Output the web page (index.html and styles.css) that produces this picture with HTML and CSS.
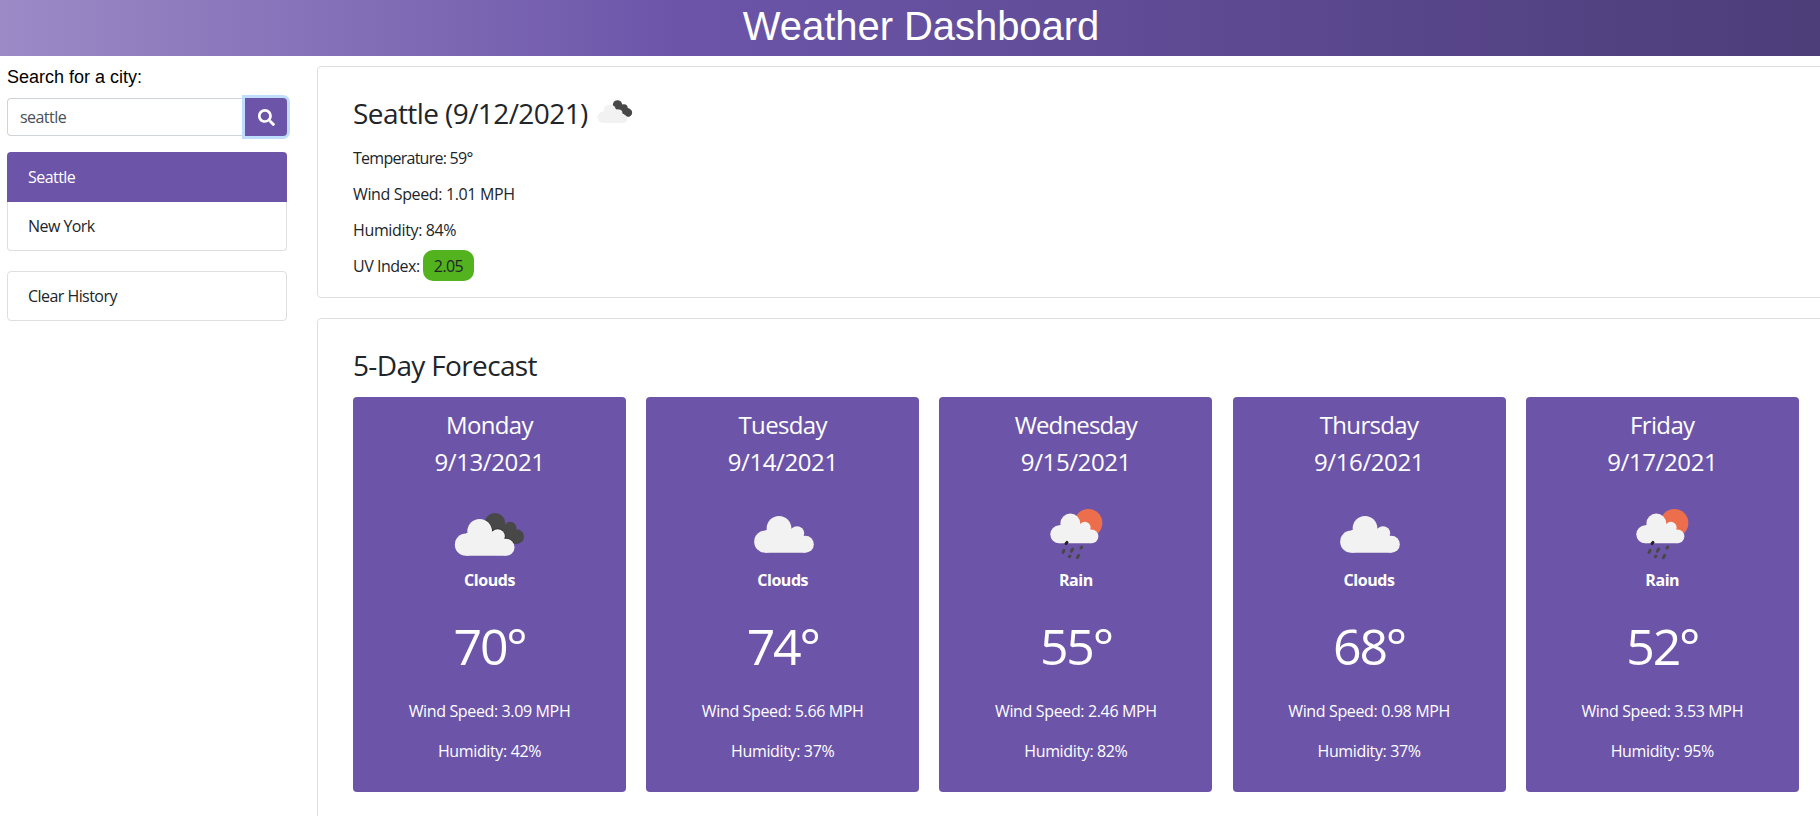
FILE: index.html
```html
<!DOCTYPE html>
<html lang="en">
<head>
<meta charset="utf-8">
<title>Weather Dashboard</title>
<link rel="stylesheet" href="styles.css">
</head>
<body>
<svg width="0" height="0" class="defs" aria-hidden="true">
  <defs>
    <g id="cloud">
      <circle cx="78" cy="134" r="33.5"/><circle cx="119" cy="94" r="37"/><circle cx="173" cy="109" r="21.5"/><circle cx="198" cy="142" r="25.5"/>
      <path d="M78 100L119 90L173 100L198 120V167.500H78Z"/>
    </g>
    <g id="dark"><circle cx="165" cy="70" r="31"/><circle cx="211" cy="84" r="18.500"/><circle cx="230" cy="110" r="22"/><path d="M165 70L211 80L228 132L190 120Z"/></g>
    <clipPath id="darkclip"><circle cx="165" cy="70" r="31"/><circle cx="211" cy="84" r="18.500"/><circle cx="230" cy="110" r="22"/><path d="M165 70L211 80L228 132L190 120Z"/></clipPath>
    <g id="broken">
      <use href="#dark" fill="#484848"/>
      <g clip-path="url(#darkclip)"><use href="#cloud" fill="none" stroke="#29292d" stroke-width="4"/></g>
      <use href="#cloud" fill="#f2f2f2"/>
    </g>
    <g id="rain">
      <circle cx="174" cy="69" r="42" fill="#ec6e4c"/>
      <g clip-path="url(#sunclip)"><use href="#cloud" transform="translate(-3 -5.200) scale(.806)" fill="none" stroke="#dc4c2c" stroke-width="4"/></g>
      <use href="#cloud" transform="translate(-3 -5.200) scale(.806)" fill="none"/>
      <use href="#cloud" transform="translate(24 -5.200) scale(.806)" fill="#f2f2f2"/>
      <g stroke="#484848" stroke-linecap="round" stroke-width="9">
        <path d="M110 127L107 131" stroke="#222"/><path d="M101 151L98 157"/><path d="M127 147L123 154"/><path d="M154 141L152 144"/><path d="M119 168L117 170"/><path d="M145 166L141 173"/>
      </g>
    </g>
    <clipPath id="sunclip"><circle cx="174" cy="69" r="42"/></clipPath>
  </defs>
</svg>
<div class="page">
  <header class="header"><h1>Weather Dashboard</h1></header>
  <main class="layout">
    <aside class="sidebar">
      <label class="label" for="city">Search for a city:</label>
      <div class="search">
        <input id="city" class="input" type="text" value="seattle">
        <button class="button" aria-label="Search"><svg width="17" height="17" viewBox="0 0 512 512" fill="#fff"><path d="M505 442.700L405.300 343c-4.500-4.500-10.600-7-17-7H372c27.600-35.300 44-79.700 44-128C416 93.100 322.900 0 208 0S0 93.100 0 208s93.100 208 208 208c48.300 0 92.700-16.400 128-44v16.300c0 6.400 2.500 12.500 7 17l99.700 99.700c9.400 9.400 24.600 9.400 33.900 0l28.300-28.300c9.400-9.400 9.400-24.600.1-34zM208 336c-70.700 0-128-57.200-128-128 0-70.700 57.200-128 128-128 70.700 0 128 57.200 128 128 0 70.700-57.200 128-128 128z"/></svg></button>
      </div>
      <ul class="list"><li class="item active">Seattle</li><li class="item">New York</li></ul>
      <ul class="list"><li class="item clear">Clear History</li></ul>
    </aside>
    <div class="content">
      <section class="panel current">
        <h2 class="heading">Seattle (9/12/2021)<svg class="now" width="50" height="35" viewBox="0 0 300 210"><g fill="#484848"><circle cx="165" cy="59" r="28"/><circle cx="204" cy="78" r="22"/><circle cx="228" cy="106" r="25"/><path d="M155 70L190 55L240 85L235 130L190 110Z"/></g><use href="#cloud" fill="#f2f2f2"/></svg></h2>
        <p class="line temp-line">Temperature: 59°</p>
        <p class="line">Wind Speed: 1.01 MPH</p>
        <p class="line">Humidity: 84%</p>
        <p class="line uv">UV Index: <span class="pill">2.05</span></p>
      </section>
      <section class="panel forecast">
        <h2 class="heading">5-Day Forecast</h2>
        <div class="days">
          <article class="day"><h3>Monday</h3><h3 class="date">9/13/2021</h3><svg class="icon" width="100" height="65" viewBox="0 0 300 195"><use href="#broken"/></svg><strong>Clouds</strong><div class="temp">70°</div><p>Wind Speed: 3.09 MPH</p><p>Humidity: 42%</p></article>
          <article class="day"><h3>Tuesday</h3><h3 class="date">9/14/2021</h3><svg class="icon" width="100" height="65" viewBox="0 0 300 195"><use href="#cloud" fill="#f2f2f2" x="19" y="-9"/></svg><strong>Clouds</strong><div class="temp">74°</div><p>Wind Speed: 5.66 MPH</p><p>Humidity: 37%</p></article>
          <article class="day"><h3 class="wed">Wednesday</h3><h3 class="date">9/15/2021</h3><svg class="icon" width="100" height="65" viewBox="-13 0 300 195"><use href="#rain"/></svg><strong>Rain</strong><div class="temp">55°</div><p>Wind Speed: 2.46 MPH</p><p>Humidity: 82%</p></article>
          <article class="day"><h3>Thursday</h3><h3 class="date">9/16/2021</h3><svg class="icon" width="100" height="65" viewBox="0 0 300 195"><use href="#cloud" fill="#f2f2f2" x="19" y="-9"/></svg><strong>Clouds</strong><div class="temp">68°</div><p>Wind Speed: 0.98 MPH</p><p>Humidity: 37%</p></article>
          <article class="day"><h3>Friday</h3><h3 class="date">9/17/2021</h3><svg class="icon" width="100" height="65" viewBox="-13 0 300 195"><use href="#rain"/></svg><strong>Rain</strong><div class="temp">52°</div><p>Wind Speed: 3.53 MPH</p><p>Humidity: 95%</p></article>
        </div>
      </section>
    </div>
  </main>
</div>
</body>
</html>
```

FILE: styles.css
```css
* { box-sizing: border-box; }
html, body { height: 816px; overflow: hidden; }
body { margin: 0; background: #fff; color: #212529; font: 16px/24px "Open Sans", "Noto Sans", sans-serif; letter-spacing: -.36px; }
h1, h2, h3, p, ul { margin: 0; padding: 0; font-weight: 400; }
.defs { display: block; }
.page { width: 1842px; }
.header { height: 56px; background: linear-gradient(to right, #9b8ac6, #6c55a9 37%, #4c3d78); text-align: center; }
.header h1 { color: #fff; font: 40px/52px "Liberation Sans", Arial, sans-serif; letter-spacing: -.05px; }
.layout { display: grid; grid-template-columns: 280px 1fr; gap: 30px; padding-left: 7px; }
.sidebar { padding-top: 9px; }
.label { display: block; height: 33px; color: #000; font: 18px/25px "Liberation Sans", Arial, sans-serif; letter-spacing: 0; }
.search { display: flex; height: 38px; margin-bottom: 16px; }
.input { width: 238px; height: 38px; padding: 0 12px; border: 1px solid #ced4da; border-right: 0; border-radius: 4px 0 0 4px; color: #495057; font: inherit; letter-spacing: -.55px; outline: 0; }
.button { display: flex; align-items: center; justify-content: center; width: 42px; height: 38px; padding: 0; border: 0; border-radius: 0 4px 4px 0; background: #6c55a9; box-shadow: 0 0 0 3px #bfdeff; }
.list { margin-bottom: 20px; list-style: none; letter-spacing: -.55px; }
.item { height: 49px; padding: 12px 20px; border: 1px solid #dfdfdf; border-top: 0; border-radius: 0 0 4px 4px; line-height: 25px; }
.item.active { height: 50px; border: 0; padding: 13px 21px; background: #6c55a9; color: #fff; border-radius: 4px 4px 0 0; }
.item.clear { height: 50px; border-top: 1px solid #dfdfdf; border-radius: 4px; }
.content { padding-top: 10px; }
.panel { border: 1px solid #dfdfdf; border-radius: 4px; padding: 28px 35px 13px; }
.current { height: 232px; margin-bottom: 20px; }
.forecast { height: 520px; padding-right: 43px; }
.heading { display: flex; height: 45px; font-size: 28px; line-height: 36px; letter-spacing: -.58px; }
.forecast .heading { height: 50px; letter-spacing: -.65px; }
.now { margin-left: 2px; }
.line { line-height: 36px; }
.temp-line { letter-spacing: -.74px; }
.uv { letter-spacing: -.48px; }
.pill { display: inline-block; height: 31px; line-height: 32px; padding: 0 10.500px; border-radius: 10px; background: #52b31f; letter-spacing: -.6px; }
.days { display: flex; gap: 20.200px; }
.day { display: flex; flex: 0 0 273px; flex-direction: column; align-items: center; height: 395px; padding-top: 9px; border-radius: 4px; background: #6c55a9; color: #fff; }
.day h3 { height: 37px; font-size: 24px; line-height: 37px; letter-spacing: -.65px; }
.day .wed { letter-spacing: -.85px; }
.day .date { letter-spacing: -.4px; }
.icon { flex: none; margin: 20px 0 3px; }
.day strong { font-weight: 700; letter-spacing: -.45px; }
.temp { margin: 24px 0 23px; font-size: 50px; line-height: 61px; height: 60px; letter-spacing: -2.200px; }
.day p { margin-bottom: 16px; }
```
